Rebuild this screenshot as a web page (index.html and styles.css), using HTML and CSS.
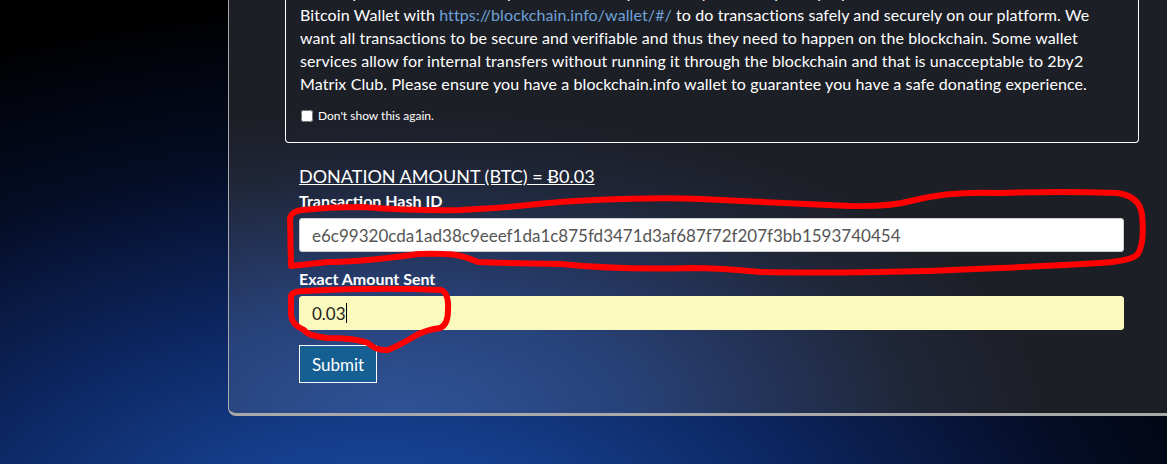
FILE: index.html
```html
<!DOCTYPE html>
<html lang="en">
<head>
    <meta charset="UTF-8">
    <meta name="viewport" content="width=device-width, initial-scale=1.0">
    <link rel="stylesheet" href="styles.css">
    <title>Donate</title>
</head>
<body>

    <div class="panel">
        <div class="notice">
            <p>
                Before you make a donation, please note that you are required to open a proper blockchain.info<br>
                Bitcoin Wallet with <a href="#">https://blockchain.info/wallet/#/</a> to do transactions safely and securely on our platform. We<br>
                want all transactions to be secure and verifiable and thus they need to happen on the blockchain. Some wallet<br>
                services allow for internal transfers without running it through the blockchain and that is unacceptable to 2by2<br>
                Matrix Club. Please ensure you have a blockchain.info wallet to guarantee you have a safe donating experience.
            </p>
            <label class="dont-show"><input type="checkbox"> Don't show this again.</label>
        </div>

        <form class="donate-form" onsubmit="return false">
            <h3 class="amount">DONATION AMOUNT (BTC) = Ƀ0.03</h3>

            <label for="hash-id">Transaction Hash ID</label>
            <input type="text" id="hash-id" class="field" value="e6c99320cda1ad38c9eeef1da1c875fd3471d3af687f72f207f3bb1593740454">

            <label for="amount-sent">Exact Amount Sent</label>
            <div class="field field-filled"><span>0.03</span><span class="caret"></span></div>

            <button type="submit" class="submit">Submit</button>
        </form>
    </div>

    <!-- marker scribbles drawn over the screenshot -->
    <svg class="scribble" width="1167" height="464" viewBox="0 0 1167 464">
        <path d="M291 266 L290 218 Q292 211 302 210 Q330 207 361 207 Q420 211 461 210 Q500 208 528 205 Q565 201 595 200 Q660 197 700 199 Q780 203 850 206 Q890 207 915 200 Q950 191 1000 193 Q1060 191 1117 193 Q1140 196 1142 215 Q1145 245 1137 255 Q1130 261 1100 263 Q1050 266 1000 268 Q940 271 880 272 Q800 273 760 272 Q720 268 690 268 Q620 270 561 264 Q500 263 478 262 Q460 254 445 254 Q420 253 411 255 Q360 262 328 262 Q300 265 291 266 Z"/>
        <path d="M291 298 Q290 291 305 291 Q380 287 441 290 Q449 293 448 310 Q448 325 440 328 Q425 330 415 336 Q400 345 388 350 Q376 351 368 343 Q355 338 328 338 Q308 336 304 330 Q292 325 291 315 Z"/>
    </svg>

</body>
</html>
```

FILE: styles.css
```css
html, body {
    margin: 0;
    height: 100%;
    overflow: hidden;
}

body {
    font-family: 'Lato', 'Liberation Sans', sans-serif;
    color: #fff;
    background-color: #000;
    background-image: radial-gradient(ellipse 980px 560px at 380px 560px, #1a4aa6 0%, #15408f 20%, #0d2660 45%, #050d26 72%, #000 100%);
    position: relative;
}

.panel {
    margin: -20px -60px 0 228px;
    padding: 0 0 30px 56px;
    border-left: 1px solid #a9a9a9;
    border-bottom: 3px solid #a9a9a9;
    border-bottom-left-radius: 8px;
    background-color: #1d1f26;
    background-image: radial-gradient(ellipse 640px 300px at 170px 100%, #2e5397 0%, #28427a 35%, #1f2638 80%, #1d1f27 100%);
}

.notice {
    width: 854px;
    box-sizing: border-box;
    border: 1px solid #fff;
    border-top: none;
    border-radius: 0 0 4px 4px;
    padding: 0 14px 20px;
}

.notice p {
    margin: 0;
    font-size: 16px;
    line-height: 23px;
    letter-spacing: 0.1px;
    white-space: nowrap;
}

.notice a {
    color: #6ea3d8;
    text-decoration: none;
}

.dont-show {
    display: flex;
    align-items: center;
    height: 13px;
    margin-top: 14px;
    font-size: 12px;
}

.dont-show input {
    margin: 0 5px 0 1px;
    width: 12px;
    height: 12px;
}

.donate-form {
    width: 825px;
    padding: 22px 14px 0;
}

.amount {
    margin: 0;
    font-size: 18px;
    font-weight: normal;
    line-height: 22px;
    text-decoration: underline;
}

.donate-form label {
    display: block;
    font-size: 16px;
    font-weight: bold;
    line-height: 19px;
    margin: 4px 0 8px;
}

.field {
    display: flex;
    align-items: center;
    width: 100%;
    height: 34px;
    box-sizing: border-box;
    padding: 0 12px;
    border: 1px solid #ccc;
    border-radius: 3px;
    background: #fff;
    color: #555;
    font-family: 'Lato', 'Liberation Sans', sans-serif;
    font-size: 17px;
    margin: 0 0 17px;
    outline: none;
}

.field-filled {
    background: #fafabe;
    border-color: #fafabe;
    color: #222;
    margin-bottom: 15px;
}

.caret {
    display: inline-block;
    width: 1px;
    height: 20px;
    background: #000;
}

.submit {
    display: block;
    padding: 0;
    height: 38px;
    width: 78px;
    background: #155f93;
    border: 1px solid #fff;
    color: #fff;
    font-family: 'Lato', 'Liberation Sans', sans-serif;
    font-size: 17px;
}

.scribble {
    position: absolute;
    top: 0;
    left: 0;
    pointer-events: none;
}

.scribble path {
    fill: none;
    stroke: #ff0000;
    stroke-width: 6;
    stroke-linejoin: round;
    stroke-linecap: round;
}
```
